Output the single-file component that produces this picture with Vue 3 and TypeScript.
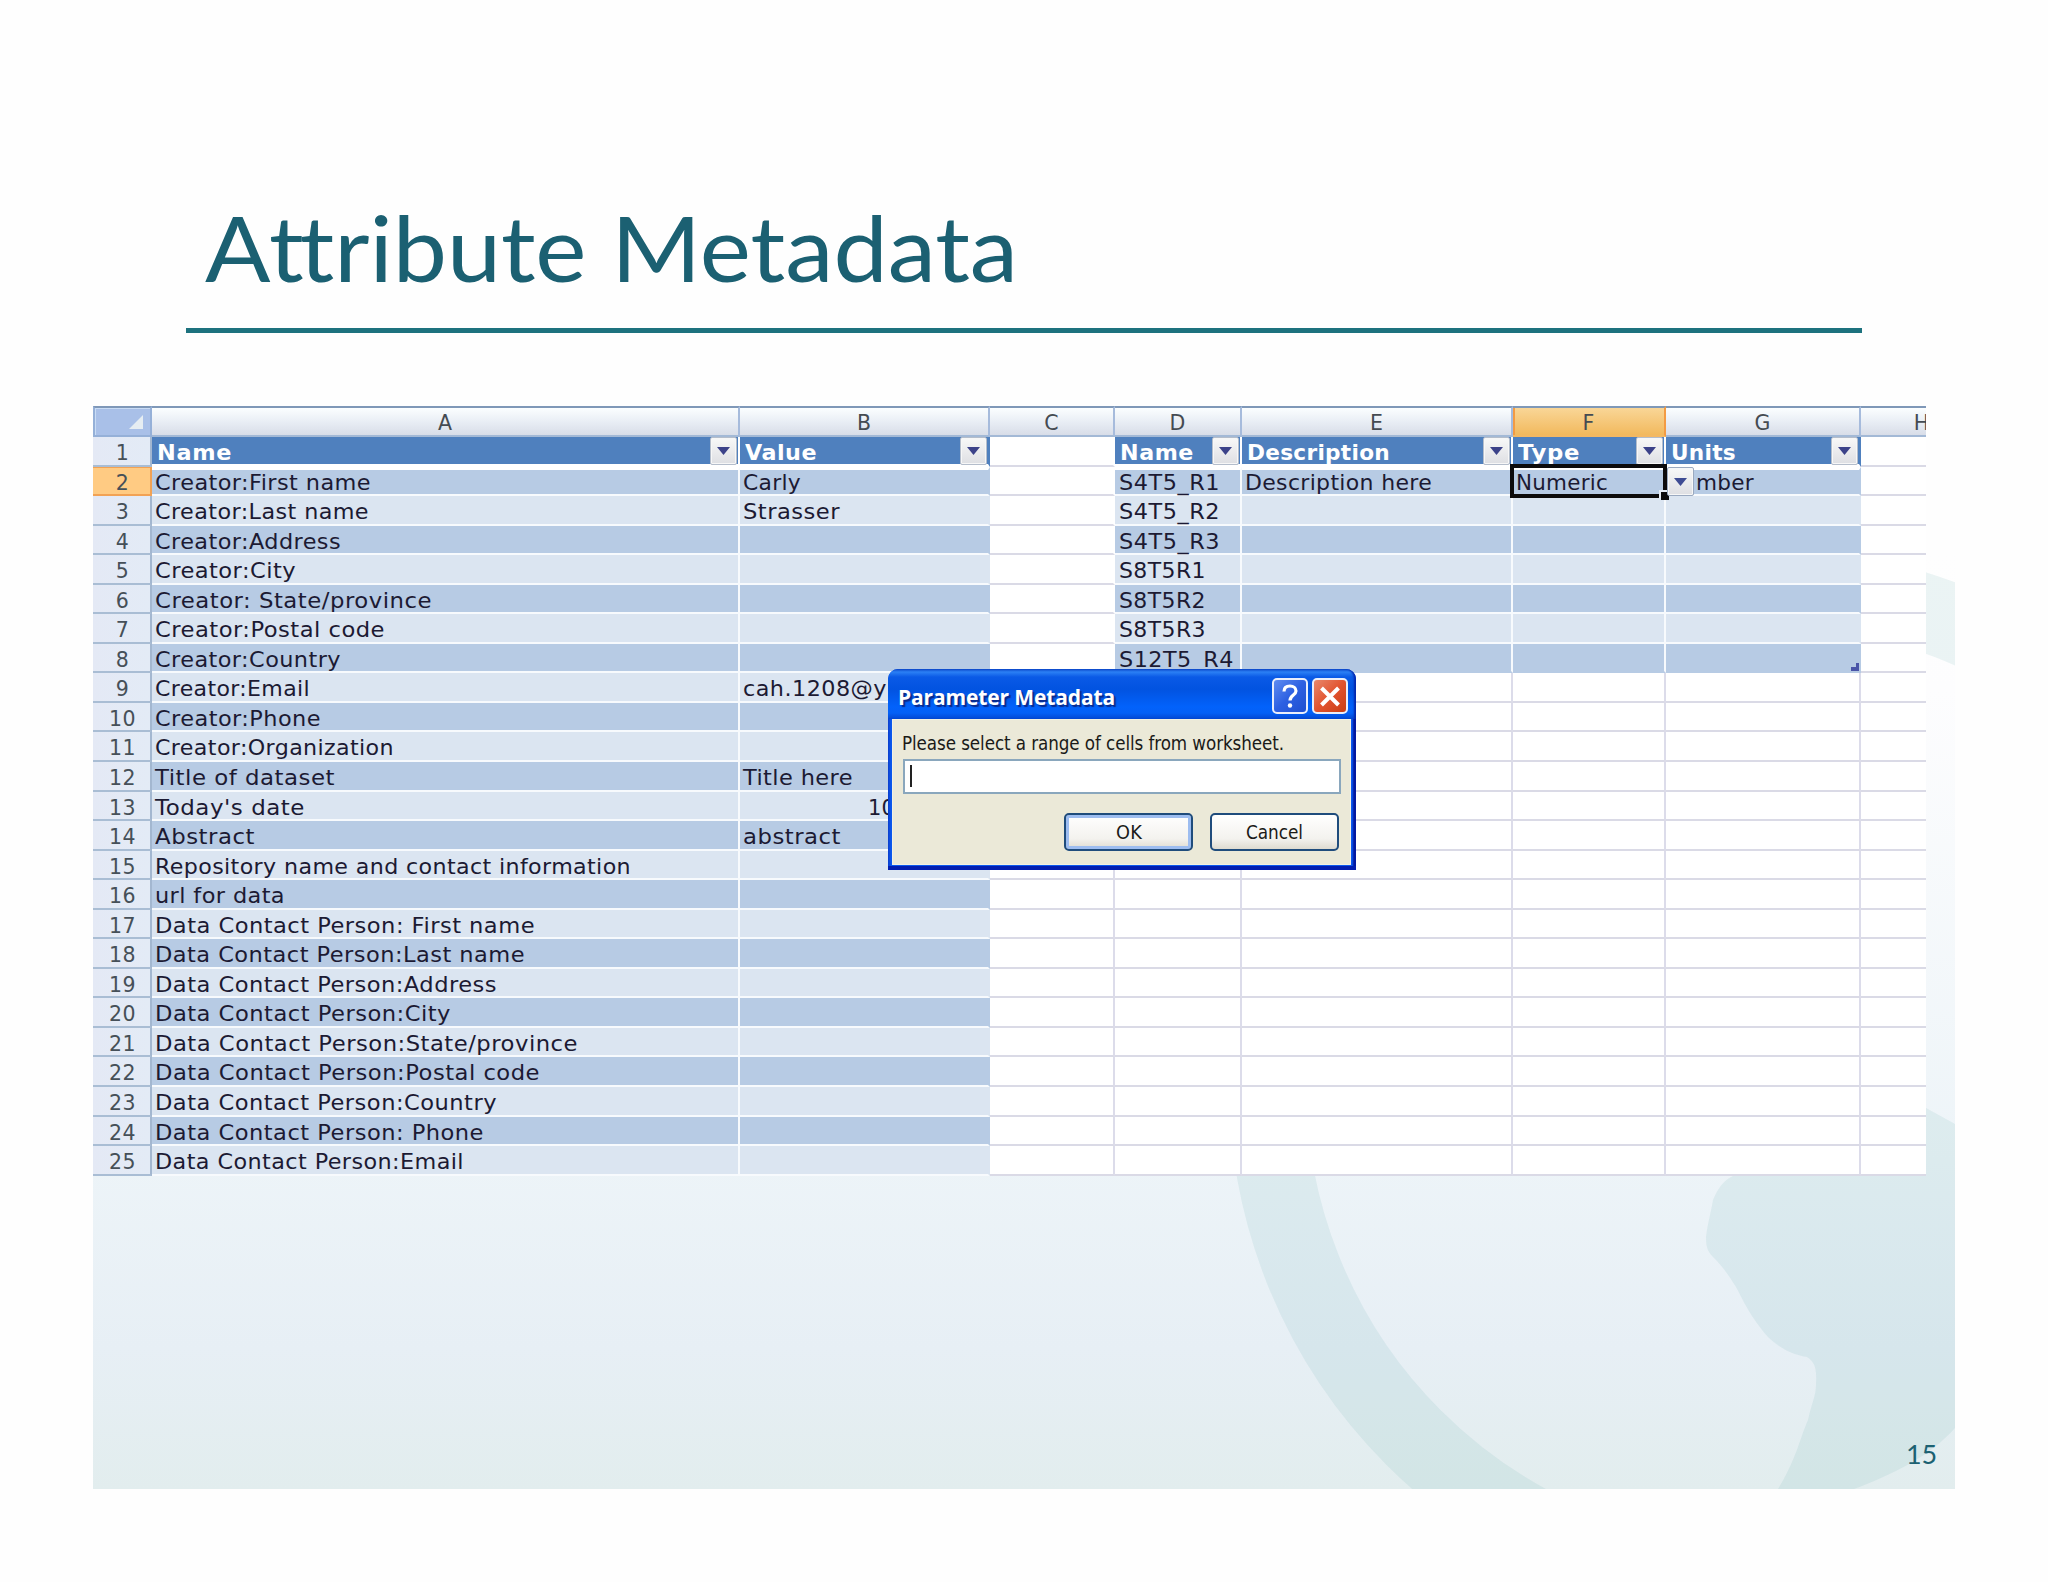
<script setup lang="ts">
interface Column { letter: string; cls: string; title?: string; titleWidth?: number }
interface Cell { text: string; width: number }
interface Row { n: number; a: Cell; b?: Cell; d?: Cell; e?: Cell; f?: Cell; g?: Cell }

const columns: Column[] = [
  { letter: 'A', cls: 'a', title: 'Name', titleWidth: 75 },
  { letter: 'B', cls: 'b', title: 'Value', titleWidth: 72 },
  { letter: 'C', cls: 'c' },
  { letter: 'D', cls: 'd', title: 'Name', titleWidth: 74 },
  { letter: 'E', cls: 'e', title: 'Description', titleWidth: 143 },
  { letter: 'F', cls: 'f', title: 'Type', titleWidth: 62 },
  { letter: 'G', cls: 'g', title: 'Units', titleWidth: 65 },
  { letter: 'H', cls: 'h' },
]

const c = (text: string, width: number): Cell => ({ text, width })

const rows: Row[] = [
  { n: 2, a: c('Creator:First name', 216), b: c('Carly', 58), d: c('S4T5_R1', 101), e: c('Description here', 187), f: c('Numeric', 92), g: c('mber', 58) },
  { n: 3, a: c('Creator:Last name', 214), b: c('Strasser', 97), d: c('S4T5_R2', 101) },
  { n: 4, a: c('Creator:Address', 186), d: c('S4T5_R3', 101) },
  { n: 5, a: c('Creator:City', 141), d: c('S8T5R1', 87) },
  { n: 6, a: c('Creator: State/province', 277), d: c('S8T5R2', 87) },
  { n: 7, a: c('Creator:Postal code', 230), d: c('S8T5R3', 87) },
  { n: 8, a: c('Creator:Country', 186), d: c('S12T5_R4', 115) },
  { n: 9, a: c('Creator:Email', 155), b: c('cah.1208@y', 144) },
  { n: 10, a: c('Creator:Phone', 166) },
  { n: 11, a: c('Creator:Organization', 239) },
  { n: 12, a: c('Title of dataset', 180), b: c('Title here', 110) },
  { n: 13, a: c("Today's date", 150), b: c('10', 27) },
  { n: 14, a: c('Abstract', 100), b: c('abstract', 98) },
  { n: 15, a: c('Repository name and contact information', 476) },
  { n: 16, a: c('url for data', 130) },
  { n: 17, a: c('Data Contact Person: First name', 380) },
  { n: 18, a: c('Data Contact Person:Last name', 370) },
  { n: 19, a: c('Data Contact Person:Address', 342) },
  { n: 20, a: c('Data Contact Person:City', 296) },
  { n: 21, a: c('Data Contact Person:State/province', 423) },
  { n: 22, a: c('Data Contact Person:Postal code', 385) },
  { n: 23, a: c('Data Contact Person:Country', 342) },
  { n: 24, a: c('Data Contact Person: Phone', 329) },
  { n: 25, a: c('Data Contact Person:Email', 309) },
]

const cellOf = (row: Row, cls: string): Cell | undefined =>
  (row as unknown as Record<string, Cell | undefined>)[cls]

const inTable = (n: number, cls: string): boolean =>
  cls === 'a' || cls === 'b' || (n <= 8 && 'defg'.includes(cls))

/*
 * Fits a label to the given width: mostly by widening its letters,
 * and for the rest by spacing them.
 */
const vFit = {
  mounted(el: HTMLElement, binding: { value: number }) {
    el.style.display = 'inline-block'
    const natural = el.getBoundingClientRect().width
    const count = (el.textContent ?? '').length
    const stretch = 1 + (binding.value / natural - 1) * 0.7
    const gap = (binding.value / stretch - natural) / count
    if (!el.querySelector('.tt')) el.style.letterSpacing = `${gap}px`
    const scale = el.querySelector('.tt') ? binding.value / natural : stretch
    el.style.transformOrigin = '0 50%'
    el.style.transform = `scaleX(${scale})`
    el.style.marginRight = `${binding.value * (1 - 1 / scale)}px`
  },
}
</script>

<template>
  <main class="page">
    <svg class="backdrop" viewBox="0 0 1862 939" width="1862" height="939" aria-hidden="true">
      <defs>
        <linearGradient id="sky" x1="0" y1="0" x2="0" y2="1">
          <stop offset="0" stop-color="#fefefe" />
          <stop offset="0.15" stop-color="#fdfdfe" />
          <stop offset="0.65" stop-color="#edf4f8" />
          <stop offset="0.85" stop-color="#e7eff5" />
          <stop offset="1" stop-color="#e2edee" />
        </linearGradient>
      </defs>
      <rect width="1862" height="939" fill="url(#sky)" />
      <g transform="translate(-93 -550)">
        <circle cx="1766" cy="1085" r="498.5" fill="none" stroke="#5aaaa5" stroke-opacity="0.115" stroke-width="77" />
        <path
          d="M1880 1090L1926 1108L1955 1124V1428C1930 1456 1894 1474 1854 1489H1778C1796 1460 1800 1438 1808 1420C1812 1402 1816 1396 1816 1384C1817 1366 1814 1362 1807 1357C1790 1354 1780 1348 1768 1337C1750 1316 1744 1302 1736 1287C1728 1274 1722 1266 1714 1258C1708 1252 1706 1248 1706 1237C1708 1222 1711 1212 1713 1200C1718 1188 1724 1180 1733 1176Z"
          fill="#5aaaa5"
          fill-opacity="0.115"
        />
      </g>
    </svg>

    <h1 class="title"><span v-fit="813"><span class="cap">A</span><span class="tt">t</span>tribute Metadata</span></h1>
    <div class="rule"></div>

    <section class="sheet">
      <div class="line heads">
        <div class="corner"><svg width="15" height="15" viewBox="0 0 15 15"><path d="M14 0V14H0Z" fill="#e6edf2" /></svg></div>
        <div v-for="col in columns" :key="col.letter" class="head" :class="[col.cls, { active: col.letter === 'F' }]">
          <span>{{ col.letter }}</span>
        </div>
      </div>

      <div class="line">
        <div class="num">1</div>
        <div v-for="col in columns" :key="col.letter" class="cell" :class="[col.cls, { caption: col.title }]">
          <template v-if="col.title">
            <span v-fit="col.titleWidth">{{ col.title }}</span>
            <i class="drop"><svg width="13" height="8" viewBox="0 0 13 8"><path d="M0 0H13L6.5 8Z" fill="#3c4289" /></svg></i>
          </template>
        </div>
      </div>

      <div v-for="row in rows" :key="row.n" class="line">
        <div class="num" :class="{ active: row.n === 2 }">{{ row.n }}</div>
        <div
          v-for="col in columns"
          :key="col.letter"
          class="cell"
          :class="[col.cls, {
            band: inTable(row.n, col.cls),
            dark: inTable(row.n, col.cls) && row.n % 2 === 0,
            first: inTable(row.n, col.cls) && row.n === 2,
            edge: 'bc'.includes(col.cls) && row.n <= 8,
            last: row.n === 8 && 'defg'.includes(col.cls),
            date: row.n === 13 && col.cls === 'b',
            unit: row.n === 2 && col.cls === 'g',
          }]"
        >
          <span v-if="cellOf(row, col.cls)" v-fit="cellOf(row, col.cls)!.width">{{ cellOf(row, col.cls)!.text }}</span>
          <svg v-if="row.n === 8 && col.cls === 'g'" class="resize" width="8" height="8" viewBox="0 0 8 8">
            <path d="M5 0H8V8H0V4H5Z" fill="#4a55a8" />
          </svg>
        </div>
      </div>

      <div class="selection"><b></b></div>
      <i class="drop picker"><svg width="13" height="8" viewBox="0 0 13 8"><path d="M0 0H13L6.5 8Z" fill="#3f4c93" /></svg></i>

      <div class="dialog">
        <header class="bar">
          <strong v-fit="217">Parameter Metadata</strong>
          <div class="controls">
            <span class="ctl help">
              <svg width="30" height="30" viewBox="0 0 30 30"><path d="M9 10.500C9 6 12 5 15 5C18.500 5 21 7 21 10C21 14 15 14 15 19.500" fill="none" stroke="#fff" stroke-width="3.200" /><circle cx="15" cy="24.500" r="2.200" fill="#fff" /></svg>
            </span>
            <span class="ctl close">
              <svg width="30" height="30" viewBox="0 0 30 30"><path d="M6.500 7L23.500 24M23.500 7L6.500 24" stroke="#fff" stroke-width="4" /></svg>
            </span>
          </div>
        </header>
        <div class="body">
          <p><span v-fit="382">Please select a range of cells from worksheet.</span></p>
          <div class="field"><i></i></div>
          <div class="actions">
            <div class="btn primary"><span v-fit="26">OK</span></div>
            <div class="btn"><span v-fit="57">Cancel</span></div>
          </div>
        </div>
      </div>
    </section>

    <footer class="foot"><span v-fit="31">15</span></footer>
  </main>
</template>

<style>
body {
  margin: 0;
  background: #fff;
}
</style>

<style scoped>
.page {
  position: relative;
  box-sizing: border-box;
  width: 2048px;
  height: 1582px;
  padding: 194px 93px 0;
  overflow: hidden;
  background: #fefefe;
  font-family: 'DejaVu Sans', Verdana, sans-serif;
}
.backdrop {
  position: absolute;
  left: 93px;
  top: 550px;
}
.title {
  height: 134px;
  margin: 0 0 0 112px;
  font: 400 91px/105px Lato, Calibri, sans-serif;
  color: #1b6072;
  white-space: nowrap;
}
.cap {
  letter-spacing: -1.500px;
}
.tt {
  letter-spacing: -4px;
}
.rule {
  width: 1676px;
  height: 5px;
  margin-left: 93px;
  background: #1d727e;
}
.sheet {
  position: relative;
  width: 1833px;
  margin-top: 73px;
  font-size: 20.500px;
  color: #1c1a33;
}
.line {
  display: flex;
  height: 29.560px;
  overflow: hidden;
}
.heads {
  height: 31px;
}
.corner,
.num {
  flex: none;
  box-sizing: border-box;
  width: 59px;
  border-right: 2px solid #a3b7d0;
}
.corner {
  display: flex;
  justify-content: flex-end;
  align-items: flex-end;
  padding: 0 6px 5px 0;
  border: 2px solid #95b0d8;
  border-top-color: #7f98b8;
  background: #a9c0e8;
  box-shadow: inset 1px 1px #c9dcf5;
}
.num {
  padding: 2px 0 0 2px;
  border-bottom: 2px solid #a9bdd4;
  background: linear-gradient(90deg, #e4e9f5, #e3ebf6);
  color: #465058;
  line-height: 29px;
  letter-spacing: 0.400px;
  text-align: center;
}
.num.active {
  background: #ffcb83;
  border-color: #f2a254;
  box-shadow: inset 0 1px #f2a254;
}
.head {
  flex: none;
  box-sizing: border-box;
  border-top: 2px solid #7f98b8;
  border-right: 2px solid #a6bbdc;
  border-bottom: 2px solid #a3b9d6;
  background: linear-gradient(#fbfeff, #e9eef5 50%, #d8dde8);
  color: #454b52;
  line-height: 30px;
  text-align: center;
}
.head.active {
  background: linear-gradient(#f9d697, #f2b95d);
  border-right-color: #f39b43;
  border-bottom-color: #f3b863;
  box-shadow: inset 2px 0 #f39b43;
}
.a { width: 588px; }
.b { width: 250px; }
.c { width: 125px; }
.d { width: 127px; }
.e { width: 271px; }
.f { width: 153px; }
.g { width: 195px; }
.h { width: 123px; }
.cell {
  position: relative;
  display: flex;
  flex: none;
  box-sizing: border-box;
  padding: 2px 0 0 3px;
  border-right: 2px solid #dcdcea;
  border-bottom: 2px solid #dadae6;
  background: #fff;
  line-height: 28px;
  white-space: pre;
}
.cell.d:not(.caption) {
  padding-left: 4px;
}
.line:nth-child(2) .c {
  border-right-color: #fff;
}
.caption {
  justify-content: space-between;
  padding: 0 0 0 5px;
  border-right-color: #fff;
  border-bottom: 3px solid #fff;
  background: #4f80be;
  color: #fff;
  font-size: 20.500px;
  font-weight: 700;
  line-height: 32px;
}
.caption.b,
.caption.g {
  border-right-color: #4f80be;
}
.caption.b,
.caption.g,
.caption.e {
  padding-left: 5px;
}
.band {
  border-color: #f7fafd;
  background: #dbe5f1;
}
.dark {
  background: #b7cbe4;
}
.first {
  border-top: 3px solid #fff;
  padding-top: 0;
  line-height: 26px;
}
.edge.c {
  border-right-color: #fff;
}
.band.b {
  border-right-color: #dbe5f1;
}
.band.g {
  border-right-color: #dbe5f1;
}
.dark.b,
.dark.g {
  border-right-color: #b7cbe4;
}
.last {
  border-bottom-color: #b7cbe4;
}
.date {
  padding-left: 128px;
}
.unit {
  padding-left: 30px;
}
.resize {
  position: absolute;
  right: 0;
  bottom: 0;
}
.drop {
  display: flex;
  align-items: center;
  justify-content: center;
  flex: none;
  box-sizing: border-box;
  width: 27px;
  height: 28px;
  margin-right: 1px;
  border: 1px solid #b4bdcb;
  border-radius: 2px;
  background: linear-gradient(#f8f8f8, #dedfe3);
  box-shadow: inset 0 0 0 1px #f7f7f7;
}
.selection {
  position: absolute;
  left: 1417px;
  top: 58px;
  box-sizing: border-box;
  width: 157px;
  height: 34px;
  border: 4px solid #0c0b0c;
}
.selection b {
  position: absolute;
  right: -6px;
  bottom: -6px;
  width: 8px;
  height: 8px;
  background: #0c0b0c;
  box-shadow: -2px -2px 0 #e7edf5;
}
.picker {
  position: absolute;
  left: 1574px;
  top: 61px;
  height: 29px;
  margin: 0;
  border-color: #9aa9c0;
}
.dialog {
  position: absolute;
  left: 795px;
  top: 263px;
  box-sizing: border-box;
  width: 468px;
  height: 201px;
  padding: 0 5px 5px 4px;
  border-radius: 10px 10px 0 0;
  background: linear-gradient(90deg, #0a3ccb, #0b58ee 3px, #0b58ee 464px, #0219a0 466px);
  box-shadow: inset 0 -4px #021eb0;
  font-family: 'DejaVu Sans Condensed', 'DejaVu Sans', Tahoma, sans-serif;
  color: #1a1a18;
}
.bar {
  display: flex;
  align-items: flex-start;
  justify-content: space-between;
  height: 50px;
  margin: 0 -5px 0 -4px;
  padding: 0 8px 0 10px;
  box-sizing: border-box;
  border-radius: 10px 10px 0 0;
  background: linear-gradient(#0a46c8 0, #2b80f5 3px, #0a5ae6 8px, #0253e0 20px, #0262fb 38px, #0460f6 44px, #0347d2 50px);
  box-shadow: inset -3px 0 2px -1px #0427ac;
}
.bar strong {
  padding-top: 12px;
  font: 700 21.500px/31px 'Open Sans', 'Trebuchet MS', sans-serif;
  color: #fff;
  text-shadow: 2px 2px 1px #0a2a8c;
  white-space: nowrap;
}
.controls {
  display: flex;
  gap: 4px;
  padding-top: 9px;
}
.ctl {
  display: flex;
  align-items: center;
  justify-content: center;
  box-sizing: border-box;
  width: 36px;
  height: 36px;
  border: 2px solid #e9eefb;
  border-radius: 5px;
}
.help {
  background: linear-gradient(135deg, #5f8cf0, #2d60e2 50%, #1e4fd0);
}
.close {
  background: linear-gradient(135deg, #e8886c, #e2532f 50%, #c93d14);
}
.body {
  box-sizing: border-box;
  height: 146px;
  padding: 12px 10px 0 11px;
  background: #ebe9d8;
  box-shadow: inset 0 0 0 1px #f3f1e2;
}
.body p {
  height: 28px;
  margin: 0 0 0 -1px;
  font-size: 19px;
  line-height: 24px;
  white-space: nowrap;
}
.field {
  box-sizing: border-box;
  height: 35px;
  padding: 4px 0 0 5px;
  border: 2px solid #8aa7bd;
  background: #fff;
}
.field i {
  display: block;
  width: 2px;
  height: 22px;
  background: #222;
}
.actions {
  display: flex;
  justify-content: flex-end;
  gap: 17px;
  margin: 18.500px 2px 0 0;
}
.btn {
  display: flex;
  align-items: center;
  justify-content: center;
  box-sizing: border-box;
  width: 129px;
  height: 38px;
  border: 2px solid #1f4c7c;
  border-radius: 5px;
  background: linear-gradient(#ffffff, #f3f2ee 70%, #dedbd0);
  font-size: 19px;
}
.primary {
  box-shadow: inset 0 0 0 3px #9dbdf0;
}
.foot {
  display: flex;
  justify-content: flex-end;
  margin: 261px 18px 0 0;
  position: relative;
  font: 400 27.500px/34px Lato, Calibri, sans-serif;
  color: #1c6172;
}
</style>
